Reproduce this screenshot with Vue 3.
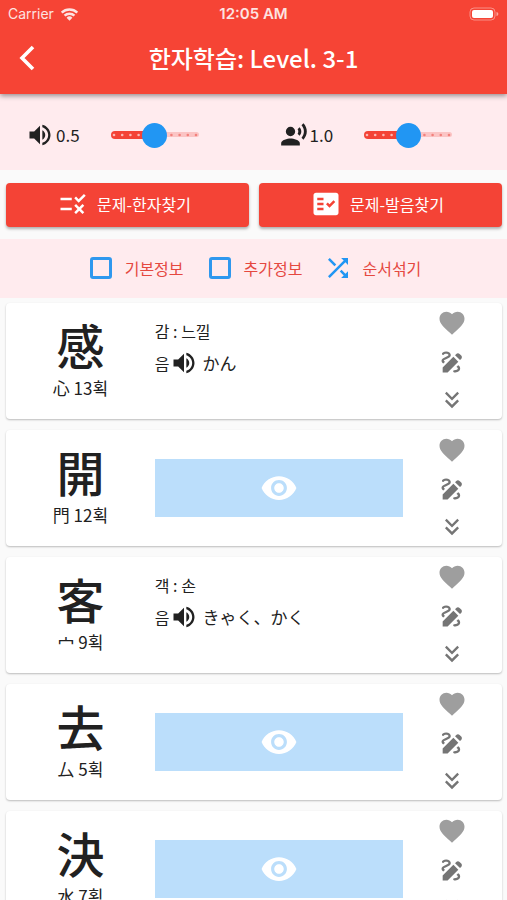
<script setup>
import { ref } from 'vue'

const icons = {
  volume: 'M3 9v6h4l5 5V4L7 9H3zm13.5 3c0-1.77-1.02-3.29-2.5-4.03v8.05c1.48-.73 2.5-2.25 2.5-4.02zM14 3.23v2.06c2.89.86 5 3.54 5 6.71s-2.11 5.85-5 6.71v2.06c4.01-.91 7-4.49 7-8.77s-2.99-7.86-7-8.77z',
  voice: 'M9 5a4 4 0 1 0 0 8 4 4 0 0 0 0-8zM9 15c-2.67 0-8 1.34-8 4v2h16v-2c0-2.66-5.33-4-8-4zm7.76-9.64l-1.68 1.69c.84 1.18.84 2.71 0 3.89l1.68 1.69c2.02-2.02 2.02-5.07 0-7.27zM20.07 2l-1.63 1.63c2.77 3.02 2.77 7.56 0 10.74L20.07 16c3.9-3.89 3.91-9.95 0-14z',
  rule: 'M16.54 11L13 7.46l1.41-1.41 2.12 2.12 4.24-4.24 1.41 1.41L16.54 11zM11 7H2v2h9V7zm10 6.41L19.59 12 17 14.59 14.41 12 13 13.41 15.59 16 13 18.59 14.41 20 17 17.41 19.59 20 21 18.59 18.41 16 21 13.41zM11 15H2v2h9v-2z',
  factCheck: 'M20 3H4c-1.1 0-2 .9-2 2v14c0 1.1.9 2 2 2h16c1.1 0 2-.9 2-2V5c0-1.1-.9-2-2-2zM10 17H5v-2h5v2zm0-4H5v-2h5v2zm0-4H5V7h5v2zm4.82 6L12 12.16l1.41-1.41 1.41 1.42L17.99 9l1.42 1.42L14.82 15z',
  shuffle: 'M10.59 9.17L5.41 4 4 5.41l5.17 5.17 1.42-1.41zM14.5 4l2.04 2.04L4 18.59 5.41 20 17.96 7.46 20 9.5V4h-5.5zm.33 9.41l-1.41 1.41 3.13 3.13L14.5 20H20v-5.5l-2.04 2.04-3.13-3.13z',
  heart: 'M12 21.35l-1.45-1.32C5.4 15.36 2 12.28 2 8.5 2 5.42 4.42 3 7.5 3c1.74 0 3.41.81 4.5 2.09C13.09 3.81 14.76 3 16.5 3 19.58 3 22 5.42 22 8.5c0 3.78-3.4 6.86-8.55 11.54L12 21.35z',
  draw: 'M18.85 10.39l1.06-1.06c.78-.78.78-2.05 0-2.83L18.5 5.09c-.78-.78-2.05-.78-2.83 0l-1.06 1.06 4.24 4.24zm-5.66-2.83L4 16.76V21h4.24l9.19-9.19-4.24-4.25zM19 17.5c0 2.19-2.54 3.5-5 3.5-.55 0-1-.45-1-1s.45-1 1-1c1.54 0 3-.73 3-1.5 0-.47-.48-.87-1.23-1.2l1.48-1.48c1.07.63 1.75 1.47 1.75 2.68zM4.58 13.35C3.61 12.79 3 12.06 3 11c0-1.8 1.89-2.63 3.56-3.36C7.59 7.18 9 6.56 9 6c0-.41-.78-1-2-1-1.26 0-1.8.61-1.83.64-.35.41-.98.46-1.4.12-.41-.34-.49-.95-.15-1.38C3.73 4.24 4.76 3 7 3s4 1.32 4 3c0 1.87-1.93 2.72-3.64 3.47C6.42 9.88 5 10.5 5 11c0 .31.43.6 1.07.86l-1.49 1.49z',
  more: 'M18 6.41L16.59 5 12 9.58 7.41 5 6 6.41l6 6zM18 13l-1.41-1.41L12 16.17l-4.59-4.58L6 13l6 6z',
  eye: 'M12 4.5C7 4.5 2.73 7.61 1 12c1.73 4.39 6 7.5 11 7.5s9.27-3.11 11-7.5c-1.73-4.39-6-7.5-11-7.5zM12 17c-2.76 0-5-2.24-5-5s2.24-5 5-5 5 2.24 5 5-2.24 5-5 5zm0-8c-1.66 0-3 1.34-3 3s1.34 3 3 3 3-1.34 3-3-1.34-3-3-3z'
}

const sliders = ref([
  { id: 'volume', icon: 'volume', name: '음량', value: 0.5, max: 1, step: 0.1 },
  { id: 'rate', icon: 'voice', name: '속도', value: 1, max: 2, step: 0.2 }
])
const tickX = (n) => 3 + n * 8.2
const thumbX = (s) => 3 + (s.value / s.max) * 82

const quizzes = [
  { icon: 'rule', text: '문제-한자찾기' },
  { icon: 'factCheck', text: '문제-발음찾기' }
]

const filters = ref([
  { id: 'basic', text: '기본정보', on: false },
  { id: 'extra', text: '추가정보', on: false }
])

const cards = ref([
  { kanji: '感', radical: '心', strokes: 13, meaning: '감 : 느낄', reading: 'かん', open: true },
  { kanji: '開', radical: '門', strokes: 12, meaning: '개 : 열', reading: 'かい', open: false },
  { kanji: '客', radical: '宀', strokes: 9, meaning: '객 : 손', reading: 'きゃく、かく', open: true },
  { kanji: '去', radical: '厶', strokes: 5, meaning: '거 : 갈', reading: 'きょ、こ', open: false },
  { kanji: '決', radical: '水', strokes: 7, meaning: '결 : 결단할', reading: 'けつ', open: false }
])
</script>

<template>
  <div class="screen">
    <header class="top">
      <div class="status">
        <span class="carrier">
          Carrier
          <svg class="wifi" viewBox="0 0 20 15" aria-hidden="true">
            <path d="M1.8 5.6a11.8 11.8 0 0 1 16.4 0M4.8 8.8a7.4 7.4 0 0 1 10.4 0" fill="none" stroke="currentColor" stroke-width="2.6" />
            <path d="M10 14.2L6.9 11a4.4 4.4 0 0 1 6.2 0z" fill="currentColor" />
          </svg>
        </span>
        <span class="clock">12:05 AM</span>
        <svg class="battery" viewBox="0 0 30 14" aria-hidden="true">
          <rect x="1" y="1" width="25" height="12" rx="4" fill="none" stroke="#fff" stroke-opacity=".4" />
          <rect x="3" y="3" width="21" height="8" rx="2" fill="#fff" />
          <path d="M27.5 5v4c1.200-.4 1.800-1.100 1.800-2s-.6-1.600-1.800-2z" fill="#fff" fill-opacity=".5" />
        </svg>
      </div>
      <div class="bar">
        <button class="back" type="button" aria-label="뒤로">
          <svg viewBox="0 0 30 30"><path d="M20 4L9 15l11 11" fill="none" stroke="currentColor" stroke-width="3.600" /></svg>
        </button>
        <h1>한자학습: Level. 3-1</h1>
      </div>
    </header>

    <section class="sliders">
      <div v-for="s in sliders" :key="s.id" class="setting">
        <label :for="s.id">
          <svg class="icon" viewBox="0 0 24 24" aria-hidden="true"><path :d="icons[s.icon]" /></svg>
          {{ s.value.toFixed(1) }}
        </label>
        <div class="range">
          <svg viewBox="0 0 88 26" aria-hidden="true">
            <rect x="40" y="10" width="48" height="5" rx="2.500" fill="#fbc4c4" />
            <rect x="0" y="9" :width="thumbX(s)" height="8" rx="4" fill="#f44336" />
            <circle
              v-for="n in 11" :key="n" :cx="tickX(n - 1)" cy="13" r="1.300"
              :fill="tickX(n - 1) < thumbX(s) ? '#fbb9b5' : '#f2807c'"
            />
          </svg>
          <input :id="s.id" v-model.number="s.value" type="range" min="0" :max="s.max" :step="s.step" :aria-label="s.name" />
        </div>
      </div>
    </section>

    <section class="quizzes">
      <button v-for="q in quizzes" :key="q.text" type="button">
        <svg class="icon large" viewBox="0 0 24 24" aria-hidden="true"><path :d="icons[q.icon]" fill-rule="evenodd" /></svg>
        {{ q.text }}
      </button>
    </section>

    <section class="filters">
      <label v-for="f in filters" :key="f.id" :for="f.id">
        <input :id="f.id" v-model="f.on" type="checkbox" />
        {{ f.text }}
      </label>
      <button type="button">
        <svg class="icon large blue" viewBox="0 0 24 24" aria-hidden="true"><path :d="icons.shuffle" /></svg>
        순서섞기
      </button>
    </section>

    <main class="list">
      <article v-for="c in cards" :key="c.kanji" class="card">
        <div class="glyph">
          <h2 lang="ja">{{ c.kanji }}</h2>
          <p>{{ c.radical }} {{ c.strokes }}획</p>
        </div>
        <div v-if="c.open" class="info">
          <p>{{ c.meaning }}</p>
          <p class="reading">
            음
            <button type="button" aria-label="발음 듣기">
              <svg class="icon" viewBox="0 0 24 24"><path :d="icons.volume" /></svg>
            </button>
            <span lang="ja">{{ c.reading }}</span>
          </p>
        </div>
        <button v-else class="cover" type="button" aria-label="정보 보기" @click="c.open = true">
          <svg viewBox="0 0 24 24"><path :d="icons.eye" /></svg>
        </button>
        <div class="actions">
          <button class="like" type="button" aria-label="즐겨찾기">
            <svg class="icon large" viewBox="0 0 24 24"><path :d="icons.heart" /></svg>
          </button>
          <button type="button" aria-label="쓰기 연습">
            <svg class="icon" viewBox="0 0 24 24"><path :d="icons.draw" /></svg>
          </button>
          <button type="button" aria-label="더 보기">
            <svg class="icon" viewBox="0 0 24 24"><path :d="icons.more" /></svg>
          </button>
        </div>
      </article>
    </main>
  </div>
</template>

<style>
body {
  background: #fafafa;
}
</style>

<style scoped>
.screen {
  display: flex;
  flex-direction: column;
  height: 100vh;
  overflow: hidden;
  background: #fafafa;
  color: #212121;
  font-family: "Noto Sans CJK KR", "Noto Sans CJK JP", sans-serif;
  font-size: 16px;
  line-height: 24px;
}

h1,
h2,
p {
  margin: 0;
  font-weight: 400;
}

button {
  display: flex;
  align-items: center;
  justify-content: center;
  padding: 0;
  border: 0;
  background: none;
  color: inherit;
  font: inherit;
  cursor: pointer;
}

.icon {
  display: block;
  flex: none;
  width: 28px;
  height: 28px;
  fill: currentColor;
}

.large {
  width: 30px;
  height: 30px;
}

.blue {
  color: #2196f3;
}

.top {
  position: relative;
  z-index: 1;
  flex: none;
  background: #f64435;
  color: #fff;
  box-shadow: 0 2px 5px rgba(0, 0, 0, 0.4);
}

.status {
  display: grid;
  grid-template-columns: 1fr auto 1fr;
  align-items: center;
  height: 28px;
  padding: 0 8px;
  font-family: Inter, sans-serif;
  font-size: 14px;
}

.carrier {
  display: flex;
  align-items: center;
  gap: 6px;
  opacity: 0.85;
}

.wifi {
  width: 19px;
  height: 15px;
}

.clock {
  font-size: 15px;
  font-weight: 600;
  opacity: 0.85;
}

.battery {
  justify-self: end;
  width: 30px;
  height: 14px;
}

.bar {
  display: grid;
  grid-template-columns: 56px 1fr 56px;
  align-items: center;
  height: 66px;
  padding-bottom: 6px;
  box-sizing: border-box;
}

.back svg {
  width: 30px;
  height: 30px;
}

h1 {
  font-size: 24px;
  font-weight: 500;
  line-height: 32px;
  text-align: center;
}

.sliders {
  display: grid;
  flex: none;
  grid-template-columns: 1fr 1fr;
  padding-top: 6px;
  height: 70px;
  background: #ffebee;
}

.setting {
  display: flex;
  align-items: center;
  justify-content: space-between;
  padding: 0 55px 0 26px;
}

.setting label {
  display: flex;
  align-items: center;
  gap: 2px;
  font-size: 17px;
}

.range {
  position: relative;
  width: 88px;
  height: 26px;
}

.range svg {
  display: block;
  width: 100%;
  height: 100%;
}

.range input {
  position: absolute;
  inset: 0;
  width: 100%;
  height: 100%;
  margin: 0;
  background: transparent;
  appearance: none;
}

.range input::-webkit-slider-thumb {
  width: 25px;
  height: 25px;
  border-radius: 50%;
  background: #2196f3;
  appearance: none;
}

.quizzes {
  display: grid;
  flex: none;
  grid-template-columns: 1fr 1fr;
  gap: 10px;
  padding: 13px 5px 12px 6px;
}

.quizzes button {
  gap: 9px;
  height: 44px;
  padding: 0 6px 2px 0;
  border-radius: 4px;
  background: #f44336;
  color: #fff;
  box-shadow: 0 2px 3px rgba(0, 0, 0, 0.3);
}

.filters {
  display: flex;
  flex: none;
  align-items: center;
  justify-content: center;
  gap: 21px;
  height: 59px;
  padding-bottom: 2px;
  box-sizing: border-box;
  background: #ffebee;
  color: #e5483f;
}

.filters label,
.filters button {
  display: flex;
  align-items: center;
  gap: 9px;
}

.filters input {
  width: 22px;
  height: 22px;
  margin: 4px;
  border: 3px solid #2f98ee;
  border-radius: 3px;
  appearance: none;
}

.filters input:checked {
  background: #2196f3;
}

.list {
  display: flex;
  flex: 1;
  flex-direction: column;
  gap: 11px;
  min-height: 0;
  padding: 5px 5px 11px 6px;
  overflow-y: auto;
  scrollbar-width: none;
}

.card {
  display: grid;
  flex: none;
  grid-template-columns: 3fr 5fr 2fr;
  align-items: center;
  min-height: 116px;
  border-radius: 4px;
  background: #fff;
  box-shadow: 0 1px 2px rgba(0, 0, 0, 0.25);
}

.glyph {
  padding-bottom: 6px;
  text-align: center;
}

.glyph h2 {
  margin-bottom: 4px;
  font-family: "Noto Sans CJK JP", sans-serif;
  font-size: 48px;
  font-weight: 500;
  line-height: 56px;
}

.glyph p {
  font-size: 17px;
}

.info {
  display: flex;
  flex-direction: column;
  align-self: start;
  gap: 6px;
  padding-top: 16px;
}

.reading {
  display: flex;
  align-items: center;
}

.reading span {
  margin-left: 5px;
  font-family: "Noto Sans CJK JP", sans-serif;
  font-size: 17px;
}

.cover {
  height: 58px;
  background: #bbdefb;
}

.cover svg {
  width: 38px;
  height: 38px;
  fill: #fff;
}

.actions {
  display: flex;
  flex-direction: column;
  align-items: center;
  gap: 10px;
  padding-bottom: 1px;
  color: #757575;
}

.like {
  color: #9e9e9e;
}
</style>
